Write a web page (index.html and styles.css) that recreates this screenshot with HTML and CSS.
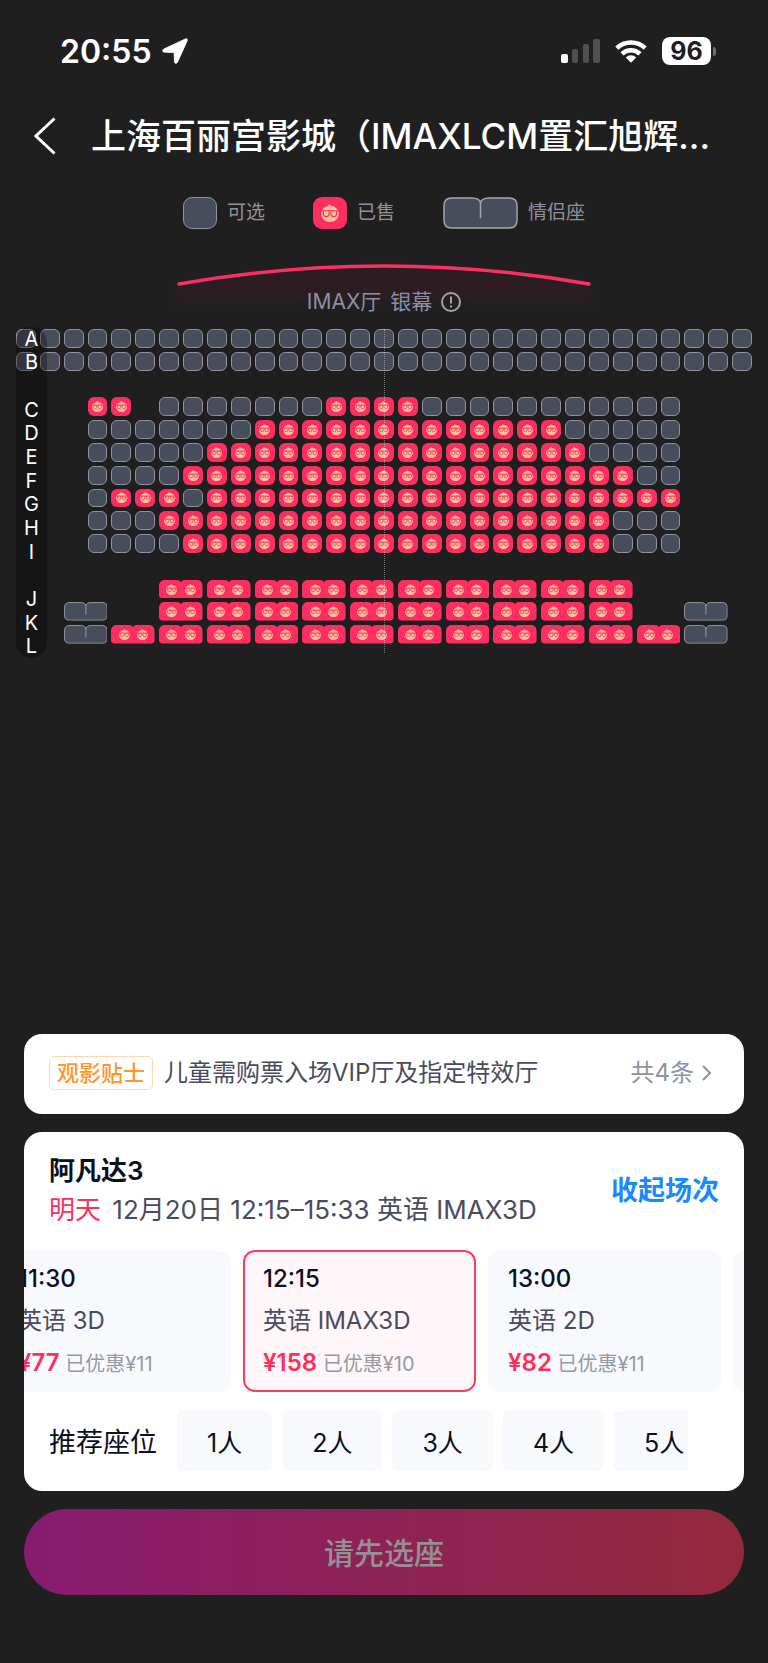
FILE: index.html
```html
<!DOCTYPE html>
<html lang="zh-CN">
<head>
    <meta charset="UTF-8">
    <meta name="viewport" content="width=device-width, initial-scale=1.0">
    <title>选座 - 上海百丽宫影城</title>
    <link rel="stylesheet" href="styles.css">
</head>
<body>
    <!-- Shared shapes -->
    <svg class="sprite" aria-hidden="true">
        <symbol id="face" viewBox="0 0 20 20">
            <path fill="#ffc39a" d="M8.6 0c1 .3 1.900 1.100 2.500 2C16 2.600 19.700 6.300 19.700 10.800c0 5.200-4.200 9.200-9.700 9.200S.3 16 .3 10.800c0-4.200 2.900-7.400 7.200-8.400C8.300 1.800 8.700 1 8.600 0z"/>
            <path fill="none" stroke="#ff2e60" stroke-width="1.300" d="M.5 7.500h19M2.700 7.500h6.300v3.400a3.150 3.150 0 0 1-6.300 0zM11 7.500h6.300v3.400a3.150 3.150 0 0 1-6.300 0z"/>
        </symbol>
        <symbol id="couple-open" viewBox="0 0 76 33" preserveAspectRatio="none">
            <path fill="#484d5b" stroke="#a3a6b0" stroke-width="1.500" d="M9 1h20c5 0 9 2 9 6 0-4 4-6 9-6h20c5 0 8 3 8 8v15c0 5-3 8-8 8H9c-5 0-8-3-8-8V9c0-5 3-8 8-8zM38 6v16"/>
        </symbol>
        <symbol id="couple-sold" viewBox="0 0 76 33" preserveAspectRatio="none">
            <path fill="#ff2e60" d="M10 0h20c4 0 7 1 8 4 1-3 4-4 8-4h20c6 0 10 4 10 10v13c0 4-4 6-10 6H10c-6 0-10-2-10-6V10C0 4 4 0 10 0z" transform="scale(1 1.140)"/>
        </symbol>
    </svg>

    <div class="status-bar">
        <div class="status-left">
            <span class="clock">20:55</span>
            <svg class="location-icon" viewBox="0 0 26 26" aria-hidden="true">
                <path fill="#fff" stroke="#fff" stroke-linejoin="round" d="M23.600.9 1.700 11.200c-1.600.9-1.200 2.800.5 2.900l9.300.3c.5 0 .7.200.7.700l.3 8.800c.1 1.700 2.100 2 2.900.4L25.200 2.600c.5-1.200-.5-2.300-1.600-1.700z"/>
            </svg>
        </div>
        <div class="status-right">
            <svg class="signal-icon" viewBox="0 0 39 24" aria-hidden="true">
                <rect x="0" y="15" width="7" height="9" rx="2" fill="#fff"/>
                <rect x="11" y="10" width="6" height="14" rx="2" fill="#505050"/>
                <rect x="22" y="5" width="6" height="19" rx="2" fill="#505050"/>
                <rect x="32" y="0" width="7" height="24" rx="2" fill="#505050"/>
            </svg>
            <svg class="wifi-icon" viewBox="0 0 32 24" aria-hidden="true">
                <path fill="none" stroke="#fff" stroke-width="4.600" d="M1.800 9.200a20.500 20.500 0 0 1 28.400 0M7 14.800a13 13 0 0 1 18 0"/>
                <path fill="#fff" d="M10.800 18.400a7.600 7.600 0 0 1 10.400 0L16 23.800z"/>
            </svg>
            <div class="battery">
                <span class="battery-level">96</span>
                <span class="battery-tip"></span>
            </div>
        </div>
    </div>

    <header class="nav">
        <a class="back" href="#" aria-label="返回">
            <svg viewBox="0 0 22 38" aria-hidden="true">
                <path fill="none" stroke="#fff" stroke-width="3" d="M20.500 1.500 2 19l18.500 17.500"/>
            </svg>
        </a>
        <h1>上海百丽宫影城（IMAXLCM置汇旭辉...</h1>
    </header>

    <ul class="legend">
        <li><span class="legend-seat seat open"></span>可选</li>
        <li><span class="legend-seat seat sold"><svg class="face"><use href="#face"/></svg></span>已售</li>
        <li><svg class="legend-couple"><use href="#couple-open"/></svg>情侣座</li>
    </ul>

    <main class="hall">
        <svg class="screen" viewBox="0 0 440 28" aria-hidden="true">
            <defs>
                <linearGradient id="glow" x1="0" y1="0" x2="0" y2="1">
                    <stop offset="0" stop-color="#ff2e60" stop-opacity="0.070"/>
                    <stop offset="0.600" stop-color="#ff2e60" stop-opacity="0.060"/>
                    <stop offset="1" stop-color="#ff2e60" stop-opacity="0"/>
                </linearGradient>
                <filter id="soften" x="-10%" y="-20%" width="120%" height="150%">
                    <feGaussianBlur stdDeviation="4"/>
                </filter>
            </defs>
            <path fill="url(#glow)" filter="url(#soften)" d="M14 24Q220-10 426 24l8 24Q220 36 6 48z"/>
            <path fill="none" stroke="#ff2e60" stroke-width="3.500" stroke-linecap="round" d="M15 22Q220-14 425 22"/>
        </svg>
        <p class="hall-name">
            <span>IMAX厅</span>
            <span>银幕</span>
            <svg viewBox="0 0 20 20" aria-hidden="true">
                <circle cx="10" cy="10" r="9" fill="none" stroke="#a3a3a0" stroke-width="2"/>
                <path stroke="#a3a3a0" stroke-width="2" d="M10 4.500v7M10 13.500v2"/>
            </svg>
        </p>
        <div class="seat-map">
            <div id="seatGrid" class="seat-grid"></div>
            <div class="center-line"></div>
            <div id="rowLabels" class="row-labels"></div>
        </div>
    </main>

    <footer class="panel">
        <a class="card tips" href="#">
            <span class="tips-tag">观影贴士</span>
            <span class="tips-text">儿童需购票入场VIP厅及指定特效厅</span>
            <span class="tips-more">共4条</span>
            <svg class="tips-arrow" viewBox="0 0 10 16" aria-hidden="true">
                <path fill="none" stroke="#8d91a3" stroke-width="2" d="m1 1 7 7-7 7"/>
            </svg>
        </a>

        <section class="card session">
            <div class="session-head">
                <div>
                    <h2>阿凡达3</h2>
                    <p class="session-info"><span class="day">明天</span> 12月20日 12:15–15:33 英语 IMAX3D</p>
                </div>
                <button class="toggle">收起场次</button>
            </div>

            <div id="showtimes" class="showtimes">
                <button class="showtime">
                    <span class="time">11:30</span>
                    <span class="version">英语 3D</span>
                    <span class="price"><b>¥77</b> 已优惠¥11</span>
                </button>
                <button class="showtime active">
                    <span class="time">12:15</span>
                    <span class="version">英语 IMAX3D</span>
                    <span class="price"><b>¥158</b> 已优惠¥10</span>
                </button>
                <button class="showtime">
                    <span class="time">13:00</span>
                    <span class="version">英语 2D</span>
                    <span class="price"><b>¥82</b> 已优惠¥11</span>
                </button>
                <div class="showtime"></div>
            </div>

            <div class="recommend">
                <span class="recommend-label">推荐座位</span>
                <div class="chips">
                    <button class="chip">1人</button>
                    <button class="chip">2人</button>
                    <button class="chip">3人</button>
                    <button class="chip">4人</button>
                    <button class="chip">5人</button>
                </div>
            </div>
        </section>

        <button class="submit" disabled>请先选座</button>
    </footer>

    <script src="script.js"></script>
</body>
</html>
```
FILE: styles.css
```css
* {
    margin: 0;
    padding: 0;
    box-sizing: border-box;
}

body {
    font-family: Inter, "Noto Sans CJK SC", sans-serif;
    background: #1f1f1f;
    color: #fff;
    min-height: 100vh;
    display: flex;
    flex-direction: column;
    overflow-x: hidden;
}

button {
    font: inherit;
    border: none;
    cursor: pointer;
}

a {
    color: inherit;
    text-decoration: none;
}

svg {
    display: block;
    flex-shrink: 0;
}

.sprite {
    position: absolute;
    width: 0;
    height: 0;
}

/* Status bar */
.status-bar {
    display: flex;
    justify-content: space-between;
    align-items: center;
    height: 102px;
    padding: 0 52px 0 60px;
}

.status-left,
.status-right {
    display: flex;
    align-items: center;
}

.status-left { gap: 10px; }
.status-right { gap: 15px; }

.clock {
    font-size: 32px;
    font-weight: 600;
}

.location-icon { width: 26px; height: 26px; }
.signal-icon { width: 39px; height: 24px; }
.wifi-icon { width: 32px; height: 24px; }

.battery {
    display: flex;
    align-items: center;
    gap: 2px;
}

.battery-level {
    width: 49px;
    border-radius: 8px;
    background: #fff;
    color: #1f1f1f;
    font-size: 25px;
    font-weight: 700;
    line-height: 28px;
    text-align: center;
}

.battery-tip {
    width: 3px;
    height: 9px;
    border-radius: 0 3px 3px 0;
    background: #6e6e6e;
}

/* Title */
.nav {
    display: flex;
    align-items: center;
    gap: 35px;
    height: 68px;
    padding: 0 34px;
}

.back svg {
    width: 22px;
    height: 38px;
}

.nav h1 {
    font-size: 35px;
    font-weight: 500;
    line-height: 48px;
    white-space: nowrap;
}

/* Legend */
.legend {
    display: flex;
    justify-content: center;
    gap: 48px;
    margin-top: 26px;
    list-style: none;
    color: #8f929e;
    font-size: 19px;
    line-height: 34px;
}

.legend li {
    display: flex;
    align-items: center;
    gap: 10px;
}

.seat {
    display: flex;
    align-items: center;
    justify-content: center;
    border-radius: 6px;
}

.seat.open {
    background: #484d5b;
    border: 1px solid #8f939f;
}

.seat.sold { background: #ff2e60; }

.legend-seat {
    width: 34px;
    height: 32px;
    border-radius: 9px;
}

.legend-seat .face {
    width: 18px;
    height: 18px;
}

.legend-couple {
    width: 75px;
    height: 32px;
}

/* Hall */
.hall { padding: 0 16px; }

.screen {
    width: 440px;
    height: 28px;
    margin: 32px auto 0;
    overflow: visible;
}

.hall-name {
    display: flex;
    align-items: center;
    justify-content: center;
    gap: 9px;
    color: #8b90a5;
    font-size: 21px;
    line-height: 24px;
}

.hall-name svg {
    width: 20px;
    height: 20px;
}

.seat-map {
    position: relative;
    margin-top: 15px;
}

.seat-grid {
    display: grid;
    grid-template-columns: repeat(31, minmax(0, 1fr));
    grid-template-rows: repeat(14, minmax(0, 1fr));
    gap: 4px;
    aspect-ratio: 736 / 315;
}

.seat-grid .face {
    width: 11px;
    height: 11px;
}

.seat-grid .couple {
    position: relative;
    grid-column-end: span 2;
    justify-content: space-evenly;
    background: none;
}

.couple-shape {
    position: absolute;
    inset: 0;
    width: 100%;
    height: 100%;
}

.couple .face { position: relative; }

.center-line {
    position: absolute;
    top: 0;
    bottom: -9px;
    left: 50%;
    border-left: 1px dotted rgba(255, 255, 255, 0.4);
}

.row-labels {
    position: absolute;
    top: -2px;
    bottom: -14px;
    left: 0;
    width: 31px;
    display: grid;
    grid-auto-rows: 1fr;
    place-items: center;
    border-radius: 15px;
    background: rgba(0, 0, 0, 0.3);
    font-size: 20px;
    line-height: 22px;
}

/* Bottom panel */
.panel {
    display: flex;
    flex-direction: column;
    gap: 18px;
    margin-top: auto;
    padding: 0 24px 68px;
}

.card {
    border-radius: 18px;
    background: #fff;
    color: #484c5e;
}

.tips {
    display: flex;
    align-items: center;
    height: 80px;
    padding: 0 32px 2px 25px;
    font-size: 24px;
    line-height: 28px;
}

.tips-tag {
    padding: 0 7px;
    border: 1px solid #ffd9ad;
    border-radius: 5px;
    color: #ff962b;
    font-size: 22px;
    font-weight: 500;
    line-height: 32px;
}

.tips-text {
    flex: 1;
    margin-left: 11px;
    white-space: nowrap;
}

.tips-more { color: #8d91a3; }

.tips-arrow {
    width: 10px;
    height: 16px;
    margin-left: 8px;
}

.session { padding: 19px 0 20px; }

.session-head {
    display: flex;
    justify-content: space-between;
    align-items: center;
    padding: 0 25px;
    font-size: 26px;
    line-height: 39px;
}

.session-head h2 {
    color: #0b0f22;
    font-size: 26px;
    font-weight: 600;
}

.session-info { white-space: nowrap; }

.day {
    margin-right: 4px;
    color: #ff2e5a;
}

.toggle {
    background: none;
    color: #1989ff;
    font-size: 27px;
    font-weight: 600;
}

.showtimes {
    display: flex;
    gap: 12px;
    margin-top: 21px;
    overflow-x: auto;
    scrollbar-width: none;
}

.showtime {
    flex: 0 0 233px;
    display: flex;
    flex-direction: column;
    justify-content: center;
    gap: 6px;
    height: 142px;
    padding: 0 18px;
    border: 2px solid #f7f9fd;
    border-radius: 12px;
    background: #f7f9fd;
    color: #484c5e;
    font-size: 24px;
    line-height: 36px;
    text-align: left;
    white-space: nowrap;
}

.showtime.active {
    border-color: #f63d64;
    background: #fff6f9;
}

.time {
    color: #0b0f22;
    font-weight: 500;
}

.price {
    color: #9699a5;
    font-size: 20px;
}

.price b {
    color: #ff2e5a;
    font-size: 24px;
    font-weight: 600;
}

.recommend {
    display: flex;
    align-items: center;
    gap: 20px;
    margin-top: 18px;
    padding: 0 56px 0 25px;
    color: #0b0f22;
}

.recommend-label {
    flex-shrink: 0;
    font-size: 27px;
}

.chips {
    display: flex;
    gap: 10px;
    overflow: hidden;
}

.chip {
    flex-shrink: 0;
    height: 61px;
    padding: 0 30px;
    border-radius: 6px;
    background: #f7f9fd;
    color: #0b0f22;
    font-size: 25px;
}

.submit {
    height: 86px;
    padding-bottom: 3px;
    border-radius: 43px;
    background: linear-gradient(90deg, #871c70, #94293d);
    color: #959095;
    font-size: 30px;
    font-weight: 500;
}
```
FILE: script.js
```javascript
// o = open, x = sold, O = open couple seat, X = sold couple seat (both take two columns), . = aisle
const rows = [
    ['A', 'o'.repeat(31)],
    ['B', 'o'.repeat(31)],
    ['', ''],
    ['C', '...xx.' + 'o'.repeat(7) + 'xxxx' + 'o'.repeat(11)],
    ['D', '...' + 'o'.repeat(7) + 'x'.repeat(13) + 'ooooo'],
    ['E', '...' + 'o'.repeat(5) + 'x'.repeat(16) + 'oooo'],
    ['F', '...' + 'o'.repeat(4) + 'x'.repeat(19) + 'oo'],
    ['G', '...oxxxo' + 'x'.repeat(20)],
    ['H', '...ooo' + 'x'.repeat(19) + 'ooo'],
    ['I', '...oooo' + 'x'.repeat(18) + 'ooo'],
    ['', ''],
    ['J', '......' + 'X'.repeat(10)],
    ['K', '..O..' + 'X'.repeat(10) + '..O'],
    ['L', '..O' + 'X'.repeat(12) + 'O']
];

const seatGrid = document.getElementById('seatGrid');
const rowLabels = document.getElementById('rowLabels');
const face = '<svg class="face"><use href="#face"/></svg>';

rows.forEach(([name, seats], rowIndex) => {
    const label = document.createElement('span');
    label.textContent = name;
    rowLabels.appendChild(label);

    let column = 1;
    let number = 1;
    for (const type of seats) {
        const isCouple = type === 'O' || type === 'X';
        if (type !== '.') {
            const isSold = type.toLowerCase() === 'x';
            const seat = document.createElement('button');
            seat.className = `seat ${isCouple ? 'couple' : isSold ? 'sold' : 'open'}`;
            seat.disabled = isSold;
            seat.style.gridRowStart = rowIndex + 1;
            seat.style.gridColumnStart = column;
            seat.setAttribute('aria-label', `${name}排${number}座`);
            if (isCouple) {
                seat.innerHTML = `<svg class="couple-shape"><use href="#couple-${isSold ? 'sold' : 'open'}"/></svg>`;
            }
            if (isSold) {
                seat.innerHTML += isCouple ? face + face : face;
            }
            seatGrid.appendChild(seat);
            number++;
        }
        column += isCouple ? 2 : 1;
    }
});

document.getElementById('showtimes').scrollLeft = 26;
```
